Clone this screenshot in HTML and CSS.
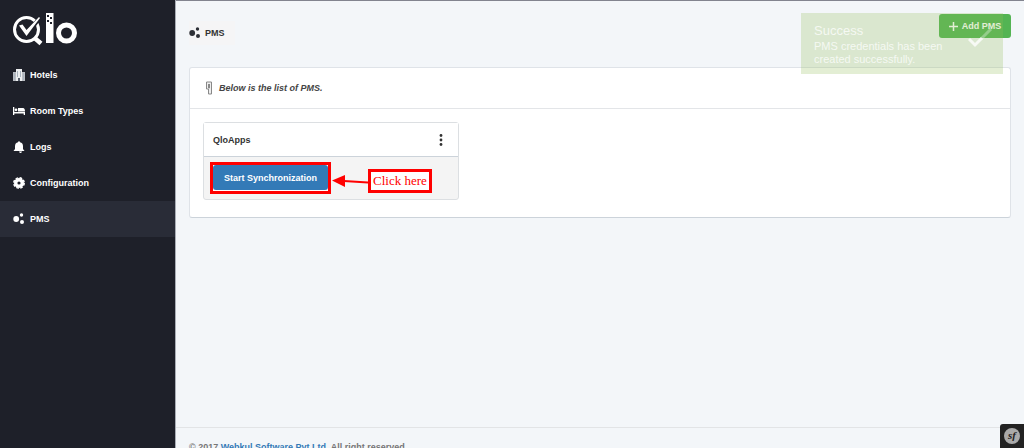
FILE: index.html
```html
<!doctype html>
<html lang="en">
	<head>
		<meta charset="utf-8" />
		<meta name="viewport" content="width=device-width, initial-scale=1.0" />
		<title>PMS</title>
		<link rel="stylesheet" href="styles.css">
	</head>
	<body>
		<div class="layout">
			<aside class="sidebar">
				<a class="logo" href="#" aria-label="Qlo">
					<svg width="66" height="34" viewBox="0 0 66 34">
						<circle cx="14.500" cy="16.500" r="12" fill="none" stroke="#fff" stroke-width="3" />
						<path d="M22 24.500l7 6" stroke="#fff" stroke-width="4.500" />
						<path d="M21 10l6-7 3 2-6 8z" fill="#1e2029" />
						<path d="M7 12.500l3.500-1 4 5.500L27 4l1 1L14.500 23z" fill="#fff" />
						<path d="M34 0h7.500v30H34V0z" fill="#fff" />
						<path d="M35 2h2v2h-2zM38 4h2v2h-2zM35 7h2v2h-2zM38 9h2v2h-2z" fill="#1e2029" />
						<circle cx="54.500" cy="20" r="8" fill="none" stroke="#fff" stroke-width="5" />
					</svg>
				</a>
				<nav class="menu">
					<a href="#">
						<svg class="icon" viewBox="0 0 12 12">
							<path d="M0 3h12v9H0z" fill="#b9bcc2" />
							<path d="M3 0h6v12H3z" fill="#eceef0" />
							<path d="M1 4h1v7H1zM10 4h1v7h-1zM4 2h1v6H4zM7 2h1v6H7z" fill="#a8b2bd" />
							<path d="M5 9h2v3H5z" fill="#59616d" />
						</svg>
						Hotels
					</a>
					<a href="#">
						<svg class="icon" viewBox="0 0 12 12">
							<path d="M0 2h1.300v5H12v3h-1.300V8.500H1.300V10H0zM5 3h5q2 0 2 3.500H5z" fill="#fff" />
							<circle cx="3" cy="4.800" r="1.400" fill="#fff" />
						</svg>
						Room Types
					</a>
					<a href="#">
						<svg class="icon" viewBox="0 0 12 12">
							<path d="M5 .5h2v.8q3 .6 3 4V8l1.500 2H.5L2 8V5.300q0-3.400 3-4zM6 10.500h3q-.5 1.500-1.500 1.500T6 10.500z" fill="#fff" />
						</svg>
						Logs
					</a>
					<a href="#">
						<svg class="icon" viewBox="0 0 12 12">
							<circle cx="6" cy="6" r="3.300" fill="none" stroke="#fff" stroke-width="3.400" />
							<circle cx="6" cy="6" r="5.200" fill="none" stroke="#fff" stroke-width="1.500" stroke-dasharray="2.600 1.480" />
						</svg>
						Configuration
					</a>
					<a class="active" href="#">
						<svg class="icon" viewBox="0 0 12 12">
							<g fill="#fff"><circle cx="3.200" cy="6" r="2.900" /><circle cx="8.500" cy="2" r="1.700" /><circle cx="9" cy="9" r="2" /></g>
						</svg>
						PMS
					</a>
				</nav>
			</aside>
			<div class="page">
				<main class="content">
					<header class="page_head">
						<h1 class="page_title">
							<svg class="icon" viewBox="0 0 12 12">
								<g fill="#2c2f36"><circle cx="3.200" cy="6" r="2.900" /><circle cx="8.500" cy="2" r="1.700" /><circle cx="9" cy="9" r="2" /></g>
							</svg>
							PMS
						</h1>
						<button type="button" class="btn btn_add">
							<svg width="9" height="9" viewBox="0 0 9 9"><path d="M4.500 0v9M0 4.500h9" stroke="#fff" stroke-width="1.500" /></svg>
							Add PMS
						</button>
					</header>
					<section class="panel">
						<div class="panel_head">
							<svg width="8" height="14" viewBox="0 0 8 14">
								<path d="M1.500 1h5v12h-3V8h-2zM3.500 3v4h1V3" fill="#eee" stroke="#888" />
							</svg>
							Below is the list of PMS.
						</div>
						<div class="panel_body">
							<article class="card">
								<div class="card_head">
									<h2>QloApps</h2>
									<button type="button" class="more" aria-label="More options">
										<svg width="4" height="12" viewBox="0 0 4 12"><g fill="#333"><circle cx="2" cy="1.500" r="1.400" /><circle cx="2" cy="6" r="1.400" /><circle cx="2" cy="10.500" r="1.400" /></g></svg>
									</button>
								</div>
								<div class="card_foot">
									<span class="marked"><button type="button" class="btn btn_sync">Start Synchronization</button></span>
									<div class="hint">
										<svg width="36" height="12" viewBox="0 0 36 12">
											<path d="M12 6l24 1.500" stroke="#f00" stroke-width="2" />
											<path d="M0 5.500L13 0v12z" fill="#f00" />
										</svg>
										<span class="note">Click here</span>
									</div>
								</div>
							</article>
						</div>
					</section>
				</main>
				<footer class="footer">© 2017 <a href="#">Webkul Software Pvt Ltd</a>. All right reserved.</footer>
			</div>
		</div>
		<div class="toast" role="status">
			<div>
				<strong>Success</strong>
				<p>PMS credentials has been created successfully.</p>
			</div>
			<svg width="25" height="20" viewBox="0 0 25 20"><path d="M1 11l6 6L14 10" fill="none" stroke="#fff" stroke-width="3" /><path d="M13 11L23 1" stroke="#fff" stroke-width="3" opacity=".4" /></svg>
		</div>
		<button type="button" class="debug" aria-label="Symfony toolbar"><span>sf</span></button>
	</body>
</html>
```

FILE: styles.css
```css
* {
	box-sizing : border-box;
}
body {
	margin : 0;
	color : #333;
	background-color : #f3f6f9;
	font-family : "Liberation Sans", Arial, sans-serif;
	font-size : 9px;
	font-weight : bold;
	line-height : 12px;
}
a {
	color : #337ab7;
	text-decoration : none;
}
h1, h2, p {
	margin : 0;
	font-size : inherit;
}
button {
	font : inherit;
	border : 0;
	padding : 0;
	cursor : pointer;
}
svg {
	flex : none;
}
.icon {
	width : 12px;
	height : 12px;
}
.layout {
	display : flex;
	height : 100vh;
	overflow : hidden;
}
.sidebar {
	flex : 0 0 176px;
	background-color : #1e2029;
	border-right : 1px solid #a9adb5;
}
.logo {
	display : block;
	height : 57px;
	padding : 13px 12px 0;
}
.logo svg {
	display : block;
}
.menu a {
	display : flex;
	align-items : center;
	gap : 5px;
	height : 36px;
	padding-left : 13px;
	color : #fff;
}
.menu .active {
	background-color : #292c37;
}
.page {
	flex : 1;
	display : flex;
	flex-direction : column;
	border-top : 1px solid #82848f;
}
.content {
	flex : 1;
	padding : 13px 13px 0;
}
.page_head {
	display : flex;
	justify-content : space-between;
	align-items : flex-start;
	height : 53px;
}
.page_title {
	display : flex;
	align-items : center;
	gap : 4px;
	height : 24px;
	margin-top : 7px;
	padding-right : 10px;
	background-color : #f5f5f6;
}
.btn {
	display : flex;
	align-items : center;
	justify-content : center;
	gap : 4px;
	height : 24px;
	border-radius : 3px;
	color : #fff;
}
.btn_add {
	width : 72px;
	background-color : #53b453;
}
.panel {
	background-color : #fff;
	border : 1px solid #dfe3e8;
	border-bottom-color : #ccd3da;
	border-radius : 3px;
}
.panel_head {
	display : flex;
	align-items : center;
	gap : 6px;
	height : 41px;
	padding-left : 15px;
	border-bottom : 1px solid #e3e5e8;
	color : #444;
	font-style : italic;
}
.panel_body {
	padding : 13px 13px 17px;
}
.card {
	width : 256px;
	border : 1px solid #dcdfe2;
	border-radius : 3px;
	background-color : #f4f4f4;
}
.card_head {
	display : flex;
	align-items : center;
	justify-content : space-between;
	height : 34px;
	padding : 0 15px 0 9px;
	border-bottom : 1px solid #ccd3da;
	background-color : #fff;
}
.more {
	display : flex;
	background : none;
}
.card_foot {
	display : flex;
	align-items : center;
	height : 42px;
	padding-left : 6px;
}
.marked {
	border : 3px solid #f00;
	background-color : #fff;
}
.btn_sync {
	width : 115px;
	height : 25px;
	margin-bottom : 1px;
	background-color : #337ab7;
}
.hint {
	display : flex;
	align-items : center;
	padding : 6px 0 0 1px;
}
.note {
	padding : 3px 2px;
	border : 3px solid #f00;
	color : #f00;
	background-color : #fff;
	font : 13px/12px "Liberation Serif", "Times New Roman", serif;
}
.footer {
	flex : 0 0 21px;
	overflow : hidden;
	padding : 13px 13px 0;
	border-top : 1px solid #e2e4e6;
	color : #777;
	white-space : nowrap;
}
.toast {
	position : absolute;
	top : 13px;
	right : 21px;
	display : flex;
	justify-content : space-between;
	width : 202px;
	height : 61px;
	padding : 11px 10px 0 13px;
	background-color : rgba(147, 191, 87, 0.26);
	color : rgba(255, 255, 255, 0.75);
	font-size : 11px;
	font-weight : normal;
	line-height : 13px;
}
.toast strong {
	display : block;
	margin-bottom : 3px;
	font-size : 13px;
	font-weight : normal;
}
.toast p {
	width : 130px;
}
.toast svg {
	margin-top : 4px;
	opacity : 0.8;
}
.debug {
	position : absolute;
	right : 0;
	bottom : 0;
	width : 24px;
	height : 24px;
	border-radius : 3px 0 0 0;
	background-color : #222;
}
.debug span {
	display : block;
	width : 16px;
	height : 16px;
	margin : 0 auto;
	border-radius : 50%;
	background-color : #aaa;
	color : #222;
	font : italic bold 11px/14px "Liberation Serif", serif;
}
```
